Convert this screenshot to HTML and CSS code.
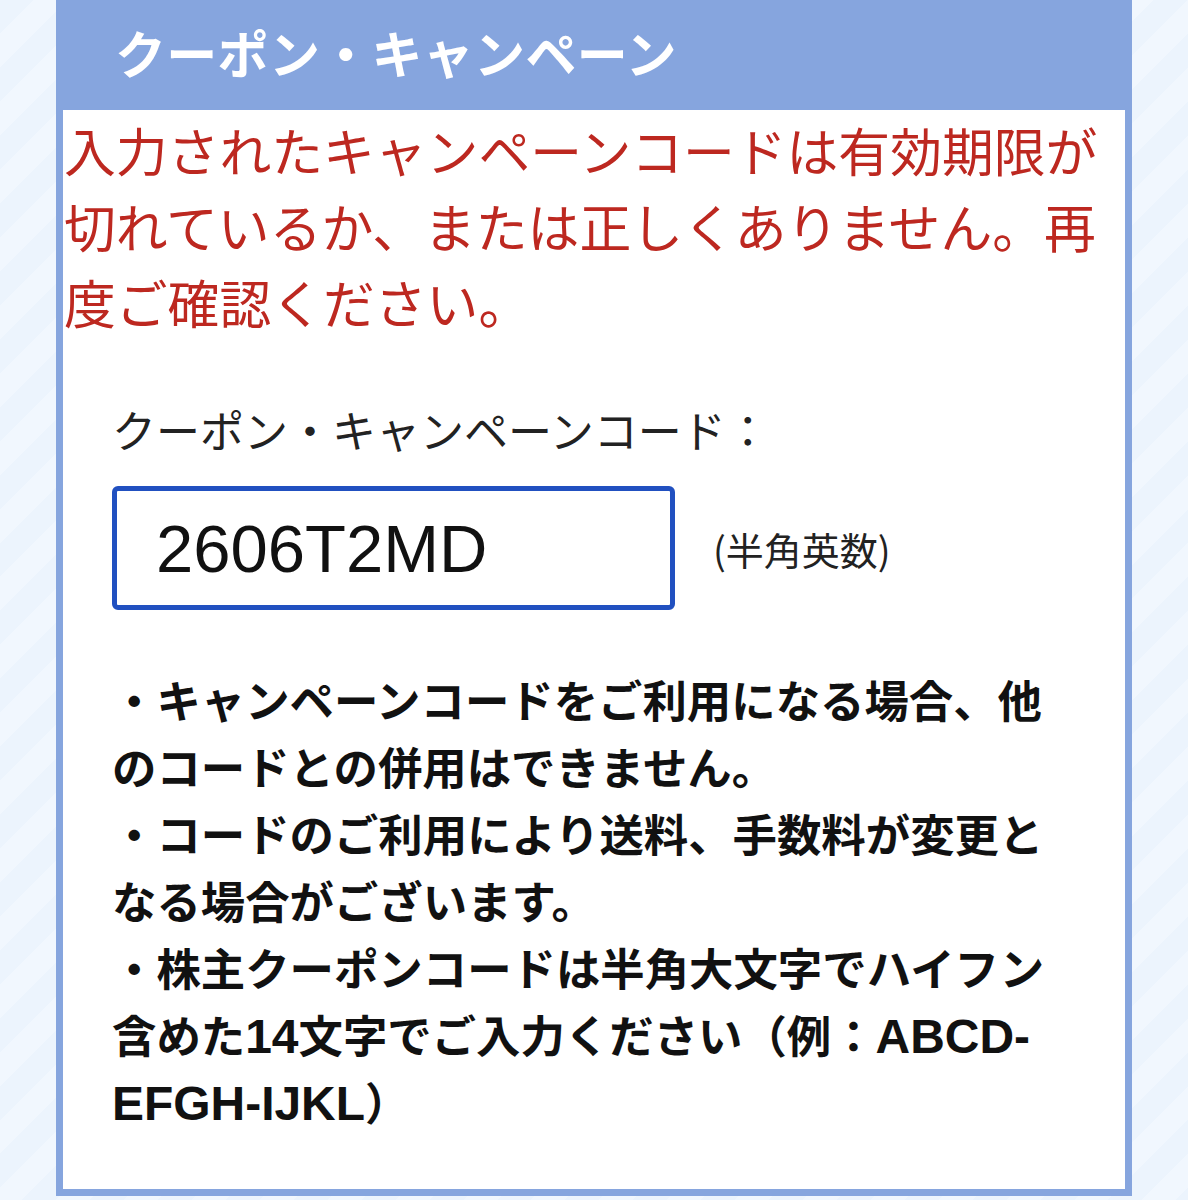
FILE: index.html
```html
<!DOCTYPE html>
<html lang="ja">
<head>
<meta charset="utf-8">
<title>クーポン・キャンペーン</title>
<link rel="stylesheet" href="styles.css">
</head>
<body>
<div class="panel">
  <div class="panel-head">
    <h2 class="panel-title">クーポン・キャンペーン</h2>
  </div>
  <div class="panel-body">
    <p class="error">入力されたキャンペーンコードは有効期限が<br>切れているか、または正しくありません。再<br>度ご確認ください。</p>
    <div class="form">
      <label class="label" for="code">クーポン・キャンペーンコード：</label>
      <div class="field-row">
        <div class="input" id="code">2606T2MD</div>
        <span class="hint">(半角英数)</span>
      </div>
      <p class="notes">・キャンペーンコードをご利用になる場合、他<br>のコードとの併用はできません。<br>・コードのご利用により送料、手数料が変更と<br>なる場合がございます。<br>・株主クーポンコードは半角大文字でハイフン<br>含めた<span class="latin">14</span>文字でご入力ください（例：<span class="latin">ABCD-</span><br><span class="latin">EFGH-IJKL</span>）</p>
    </div>
  </div>
</div>
</body>
</html>
```
FILE: styles.css
```css
html, body {
  margin: 0;
  padding: 0;
}
body {
  width: 1188px;
  height: 1200px;
  overflow: hidden;
  font-family: "Noto Sans CJK JP", "Noto Sans", sans-serif;
  background-color: #eef5fd;
  background-image: repeating-linear-gradient(135deg, #ecf4fd 0 24px, #f1f7fe 24px 48px);
}
.panel {
  margin-left: 56px;
  width: 1076px;
}
.panel-head {
  height: 110px;
  box-sizing: border-box;
  background: #86a5de;
  padding: 27px 0 0 59px;
}
.panel-title {
  margin: 0;
  color: #ffffff;
  font-size: 51px;
  line-height: 51px;
  font-weight: 700;
  letter-spacing: 0.3px;
}
.panel-body {
  background: #ffffff;
  border: 7px solid #86a5de;
  border-top: 0;
  padding: 2px 0 55px 1px;
}
.error {
  margin: 0;
  color: #bd2820;
  font-size: 51.8px;
  line-height: 76px;
  white-space: nowrap;
}
.form {
  padding-left: 48px;
}
.label {
  display: block;
  margin-top: 59px;
  font-size: 44px;
  line-height: 60px;
  color: #222222;
  font-weight: 400;
}
.field-row {
  display: flex;
  align-items: center;
  gap: 38px;
  margin-top: 27px;
}
.input {
  width: 563px;
  height: 124px;
  box-sizing: border-box;
  border: 5px solid #2150c0;
  border-radius: 6px;
  padding-left: 39px;
  display: flex;
  align-items: center;
  font-family: "Liberation Sans", Arial, sans-serif;
  font-size: 67px;
  color: #111111;
}
.hint {
  font-size: 38px;
  color: #222222;
}
.notes {
  margin: 55px 0 0 0;
  font-size: 44.4px;
  line-height: 67px;
  font-weight: 700;
  color: #111111;
  white-space: nowrap;
}
.latin {
  font-family: "Liberation Sans", Arial, sans-serif;
  font-size: 1.08em;
  line-height: 1;
}
```
